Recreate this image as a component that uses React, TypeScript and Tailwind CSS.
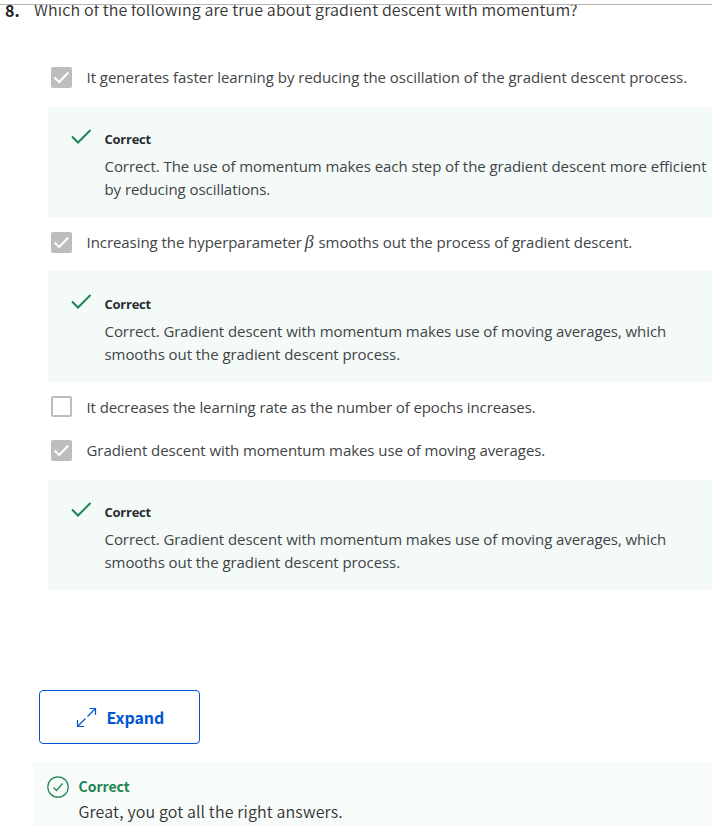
import type { ReactNode } from "react";

const body = "font-['Open_Sans','Noto_Sans',sans-serif]";
const source = "font-['Noto_Sans_CJK_SC',sans-serif]";

function Checkbox({ checked }: { checked: boolean }) {
  return (
    <span className={`ml-[51px] flex h-[21px] w-[21px] shrink-0 items-center justify-center rounded-[2px] border-2 border-[#bdbdbd] ${checked ? "bg-[#bdbdbd]" : "bg-white"}`}>
      {checked && (
        <svg className="shrink-0" width="17" height="17" viewBox="0 0 17 17" fill="none" stroke="white" strokeWidth="2.2">
          <path d="M1.5 8.5 6.2 13 15.3 3.5" />
        </svg>
      )}
    </span>
  );
}

function Option({ checked = false, spacing, children }: { checked?: boolean; spacing: string; children: ReactNode }) {
  return (
    <label className="flex h-[21px] items-center">
      <Checkbox checked={checked} />
      <span className={`ml-[14.5px] whitespace-nowrap text-[15px] leading-[21px] ${spacing}`}>{children}</span>
    </label>
  );
}

function Feedback({ first, second, spacing, size = "h-[110px] pt-[20px]" }: { first: string; second: string; spacing: string; size?: string }) {
  return (
    <section className={`ml-12 flex bg-[#f4faf8] ${size}`}>
      <svg className="ml-[23px] mt-[1px] shrink-0" width="21" height="17" viewBox="0 0 21 17" fill="none" stroke="#1f8354" strokeWidth="2">
        <path d="M1 8.5 7 14.5 19.5 2" />
      </svg>
      <div className="ml-[12.5px] whitespace-nowrap">
        <div className="h-[28px] text-[13px] font-bold leading-[24px] tracking-[-0.25px] text-[#292d32]">Correct</div>
        <p className={`text-[15px] leading-[23px] ${spacing}`}>{first}<br />{second}</p>
      </div>
    </section>
  );
}

export default function App() {
  return (
    <main className={`h-[826px] w-[712px] overflow-hidden bg-white text-[#414446] ${body}`}>
      <div className="relative z-10 h-[5px] border-b border-[#b5b5b5] bg-white" />
      <div className={`flex h-[62px] whitespace-nowrap text-[16px] leading-[24px] ${source}`}>
        <strong className="-mt-[7px] ml-[5px] w-[29px] text-[#222]">8.</strong>
        <h1 className="-mt-[8px] font-[350] tracking-[0.13px] text-[#333]">Which of the following are true about gradient descent with momentum?</h1>
      </div>
      <Option checked spacing="tracking-[-0.03px]">It generates faster learning by reducing the oscillation of the gradient descent process.</Option>
      <div className="h-[19px]" />
      <Feedback spacing="tracking-[-0.06px]" first="Correct. The use of momentum makes each step of the gradient descent more efficient" second="by reducing oscillations." />
      <div className="h-[15px]" />
      <Option checked spacing="tracking-[-0.06px]">
        Increasing the hyperparameter <i className="-ml-[1px] mr-[1px] font-['Liberation_Serif',serif] text-[18px] leading-none">β</i> smooths out the process of gradient descent.
      </Option>
      <div className="h-[18px]" />
      <Feedback size="h-[111px] pt-[21px]" spacing="tracking-[-0.07px]" first="Correct. Gradient descent with momentum makes use of moving averages, which" second="smooths out the gradient descent process." />
      <div className="h-[14px]" />
      <Option spacing="tracking-[-0.1px] pt-[2px]">It decreases the learning rate as the number of epochs increases.</Option>
      <div className="h-[23px]" />
      <Option checked spacing="tracking-[-0.065px]">Gradient descent with momentum makes use of moving averages.</Option>
      <div className="h-[19px]" />
      <Feedback spacing="tracking-[-0.07px]" first="Correct. Gradient descent with momentum makes use of moving averages, which" second="smooths out the gradient descent process." />
      <div className="h-[100px]" />
      <button className={`ml-[39px] flex h-[54px] w-[161px] items-center rounded-[4px] border border-[#0056d2] pl-[36px] text-[16px] font-bold text-[#0056d2] ${source}`}>
        <svg width="21" height="21" viewBox="0 0 21 21" fill="none" stroke="currentColor" strokeWidth="1.2">
          <path d="M13.5 1.5h6V8M19.5 1.5l-8 8M9.5 11.5l-8 8M1.5 13v6.5H8" />
        </svg>
        <span className="ml-[9.5px] tracking-[-0.1px]">Expand</span>
      </button>
      <div className="h-[18px]" />
      <section className={`ml-[33px] flex h-[64px] bg-[#f7fbf9] pt-[12px] ${source}`}>
        <svg className="ml-[14px] mt-[2px]" width="22" height="22" viewBox="0 0 22 22" fill="none" stroke="#1f8354" strokeWidth="1.2">
          <circle cx="11" cy="11" r="10.2" />
          <path d="m6.5 11.5 3 3 6-7" />
        </svg>
        <div className="ml-[9.5px] whitespace-nowrap">
          <div className="text-[14px] font-bold leading-[25px] text-[#1f8354]">Correct</div>
          <p className="text-[16px] font-[350] leading-[25px] tracking-[0.13px] text-[#333]">Great, you got all the right answers.</p>
        </div>
      </section>
    </main>
  );
}
